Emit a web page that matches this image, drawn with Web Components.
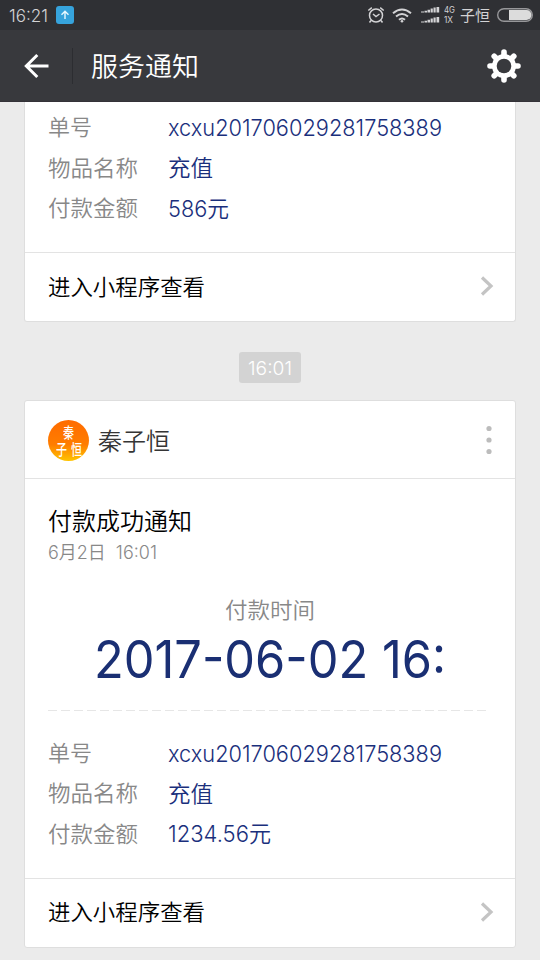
<!DOCTYPE html>
<html lang="zh-CN">
<head>
<meta charset="utf-8">
<title>服务通知</title>
<style>
html,body{margin:0;height:960px;overflow:hidden;background:#ebebeb}
body{font-family:Inter,"Noto Sans CJK SC",sans-serif;font-weight:350;display:flex;flex-direction:column}
</style>
</head>
<body>
<status-bar></status-bar>
<title-bar>服务通知</title-bar>
<message-list></message-list>
<script>
const define=(name,html,setup)=>customElements.define(name,class extends HTMLElement{
  connectedCallback(){
    if(this.shadowRoot)return;
    this.attachShadow({mode:'open'}).innerHTML=html;
    if(setup)setup(this,this.shadowRoot);
  }
});

/* One line of text, condensed or widened to the advance given in "w". */
define('fit-text',`<style>
:host{display:inline-block;white-space:pre;line-height:1.2;flex:none}
span{display:inline-block;transform-origin:0 50%}
</style><span></span>`,(el,root)=>{
  const s=root.querySelector('span'),w=+el.getAttribute('w');
  s.textContent=el.getAttribute('text');
  el.style.width=w+'px';
  s.style.transform='scaleX('+w/s.getBoundingClientRect().width+')';
});

define('status-bar',`<style>
:host{display:flex;align-items:center;height:30px;flex:none;background:#2f3034;color:#d3d3d5;padding:0 7px 0 9px;box-sizing:border-box}
.t{font-size:17.5px;font-weight:350}
.up{margin-left:8px;margin-right:auto}
svg{display:block;flex:none}
.net{display:flex;flex-direction:column;font-size:8.500px;font-weight:400;gap:1px;margin:1px 5px 0 4px}
.net fit-text{line-height:9px}
.n{font-size:15px;margin-right:7px;font-weight:400;margin-top:1px}
</style>
<fit-text class="t" w="39" text="16:21"></fit-text>
<svg class="up" width="18" height="18" viewBox="0 0 18 18"><rect width="18" height="18" rx="3" fill="#36a3dc"/><path d="M9 13V5.5M5.5 8.7L9 5.2l3.500 3.500" fill="none" stroke="#e9f8ff" stroke-width="1.400"/></svg>
<svg width="18" height="18" viewBox="0 0 18 18" fill="none" stroke="#d3d3d5" stroke-width="1.500"><circle cx="9" cy="9.500" r="6.500"/><path d="M6 8l3 2.500 3.500-2.500M1.300 4.500L4.800 1.700M16.700 4.500l-3.500-2.800M4 14.500l-1.500 2M14 14.500l1.500 2"/></svg>
<svg style="margin:0 9px 0 7px" width="20" height="15" viewBox="0 0 20 15" fill="none" stroke="#d3d3d5" stroke-width="2"><path d="M1 5.200Q10-2.300 19 5.200M4 8.600Q10 3.500 16 8.600M7 11.700Q10 9.200 13 11.700"/><circle cx="10" cy="13.200" r="1.300" fill="#d3d3d5" stroke="none"/></svg>
<svg width="19" height="18" viewBox="0 0 19 18" fill="#d3d3d5"><path id="b" d="M0 6.500V5.500h3v1zM3.500 6.500V4.800h2.500v1.700zM6.500 6.500V3.800h2.500v2.700zM9.600 6.500V2.500h2.200v4zM12.500 6.500V1.500h2.200v5zM15.500 6.500V1h2.700v5.500z"/><use href="#b" y="10"/></svg>
<div class="net"><fit-text w="11" text="4G"></fit-text><fit-text w="9" text="1X"></fit-text></div>
<fit-text class="n" w="30" text="子恒"></fit-text>
<svg width="36" height="14" viewBox="0 0 36 14"><rect x=".7" y=".7" width="34.600" height="12.600" rx="6.300" fill="none" stroke="#97979a" stroke-width="1.400"/><path d="M12 2h17.500a5 5 0 0 1 0 10H12z" fill="#dcdcdc"/></svg>`);

define('title-bar',`<style>
:host{display:flex;align-items:center;height:72px;flex:none;background:#38393d;color:#fff;padding:0 19px 0 24px;box-sizing:border-box;border-bottom:1px solid #343238}
i{width:1px;height:36px;background:#2c2d31;margin:0 18px 0 23px}
fit-text{font-size:26.500px;margin-top:2px}
.g{margin-left:auto}
svg{display:block;flex:none}
</style>
<svg width="25" height="26" viewBox="0 0 25 26" fill="none" stroke="#fff" stroke-width="3"><path d="M24.500 13H3M13.300 2L2.300 13l11 11"/></svg><i></i>
<fit-text></fit-text>
<svg class="g" width="34" height="34" viewBox="-17 -17 34 34"><g stroke="#fff" stroke-width="5.600" stroke-linecap="round"><path d="M0-14V14M-14 0H14M-9.800-9.800L9.800 9.800M9.800-9.800L-9.800 9.800"/></g><circle r="12" fill="#fff"/><circle r="7.300" fill="#38393d"/></svg>`,(el,root)=>{
  const old=root.querySelector('fit-text'),n=document.createElement('fit-text');
  n.setAttribute('w','108');n.setAttribute('text',el.textContent);old.replaceWith(n);
});

define('message-list',`<style>
:host{display:flex;flex-direction:column;align-items:center;flex:1;min-height:0}
.badge{box-sizing:border-box;height:31px;width:62px;margin:30px 0 17px;background:#d3d3d3;border-radius:3px;color:#fff;font-size:18.500px;display:flex;align-items:center;justify-content:center;padding-top:1px}
</style>
<notice-card continued>
 <detail-row label="单号" lw="44" value="xcxu201706029281758389" w="274"></detail-row>
 <detail-row label="物品名称" lw="90" value="充值" w="45"></detail-row>
 <detail-row label="付款金额" lw="90" value="586元" w="61"></detail-row>
</notice-card>
<div class="badge"><fit-text w="44" text="16:01"></fit-text></div>
<notice-card>
 <account-head slot="head"></account-head>
 <pay-summary slot="head"></pay-summary>
 <detail-row label="单号" lw="44" value="xcxu201706029281758389" w="274"></detail-row>
 <detail-row label="物品名称" lw="90" value="充值" w="45"></detail-row>
 <detail-row label="付款金额" lw="90" value="1234.56元" w="103"></detail-row>
</notice-card>`);

define('notice-card',`<style>
:host{display:block;box-sizing:border-box;width:492px;background:#fff;border:1px solid #dedede;border-radius:3px}
.rows{padding:22px 23px 23.500px}
:host([continued]){border-top:0;border-radius:0 0 3px 3px}
:host([continued]) .rows{padding-top:5.300px;padding-bottom:23.500px}
footer{display:flex;align-items:center;justify-content:space-between;border-top:1px solid #e3e3e3;height:68px;padding:0 21px 0 23px;color:#000;font-size:22px}
svg{margin-top:-2px}
</style>
<slot name="head"></slot>
<div class="rows"><slot></slot></div>
<footer><fit-text w="157" text="进入小程序查看"></fit-text><svg width="14" height="20" viewBox="0 0 14 20" fill="none" stroke="#c4c4c4" stroke-width="3.200"><path d="M2 1.500L11 10l-9 8.500"/></svg></footer>`);

define('detail-row',`<style>
:host{display:flex;align-items:center;height:40.400px}
.k{width:120px;color:#888;font-size:22px;display:flex}
.v{color:#1a2f7c;font-size:22.500px}
</style><div class="k"></div><div class="v"></div>`,(el,root)=>{
  const add=(box,text,w)=>{const n=document.createElement('fit-text');n.setAttribute('text',text);n.setAttribute('w',w);root.querySelector(box).append(n)};
  add('.k',el.getAttribute('label'),el.getAttribute('lw'));
  add('.v',el.getAttribute('value'),el.getAttribute('w'));
});

define('account-head',`<style>
:host{display:flex;align-items:center;height:77px;border-bottom:1px solid #e3e3e3;padding:0 23px}
.a{width:41px;height:41px;border-radius:50%;background:linear-gradient(#ff6b00,#ff7d00 60%,#ffc400);color:#fff;display:grid;justify-items:center;align-content:center;font:500 15px "Noto Sans CJK SC",sans-serif;margin:2px 9px 0 0}
.a fit-text{line-height:17px}
.r{display:flex;gap:4px}
.n{font-size:24px;color:#353535;padding-top:6px}
svg{margin:1px 0 0 auto}
</style>
<div class="a"><fit-text w="11" text="秦"></fit-text><div class="r"><fit-text w="11" text="子"></fit-text><fit-text w="11" text="恒"></fit-text></div></div>
<fit-text class="n" w="72" text="秦子恒"></fit-text>
<svg width="6" height="30" viewBox="0 0 6 30" fill="#bcbcbc"><circle cx="3" cy="3.500" r="2.600"/><circle cx="3" cy="15" r="2.600"/><circle cx="3" cy="26.500" r="2.600"/></svg>`);

define('pay-summary',`<style>
:host{display:flex;flex-direction:column;padding:29.500px 23px 0}
.t{font-size:24px;color:#000;height:29px}
.d{font-size:18px;color:#888;height:22px;margin-top:5px}
.l{font-size:22px;color:#888;align-self:center;height:27px;margin-top:32.500px}
.b{font-size:52px;font-weight:370;color:#1a2f73;align-self:center;height:62px;margin-top:5px}
svg{display:block;margin-top:19px}
</style>
<fit-text class="t" w="144" text="付款成功通知"></fit-text>
<fit-text class="d" w="109" text="6月2日  16:01"></fit-text>
<fit-text class="l" w="90" text="付款时间"></fit-text>
<fit-text class="b" w="352" text="2017-06-02 16:"></fit-text>
<svg width="442" height="1"><path d="M0 .5h442" stroke="#e6e6e6" stroke-dasharray="9 4"/></svg>`);
</script>
</body>
</html>
